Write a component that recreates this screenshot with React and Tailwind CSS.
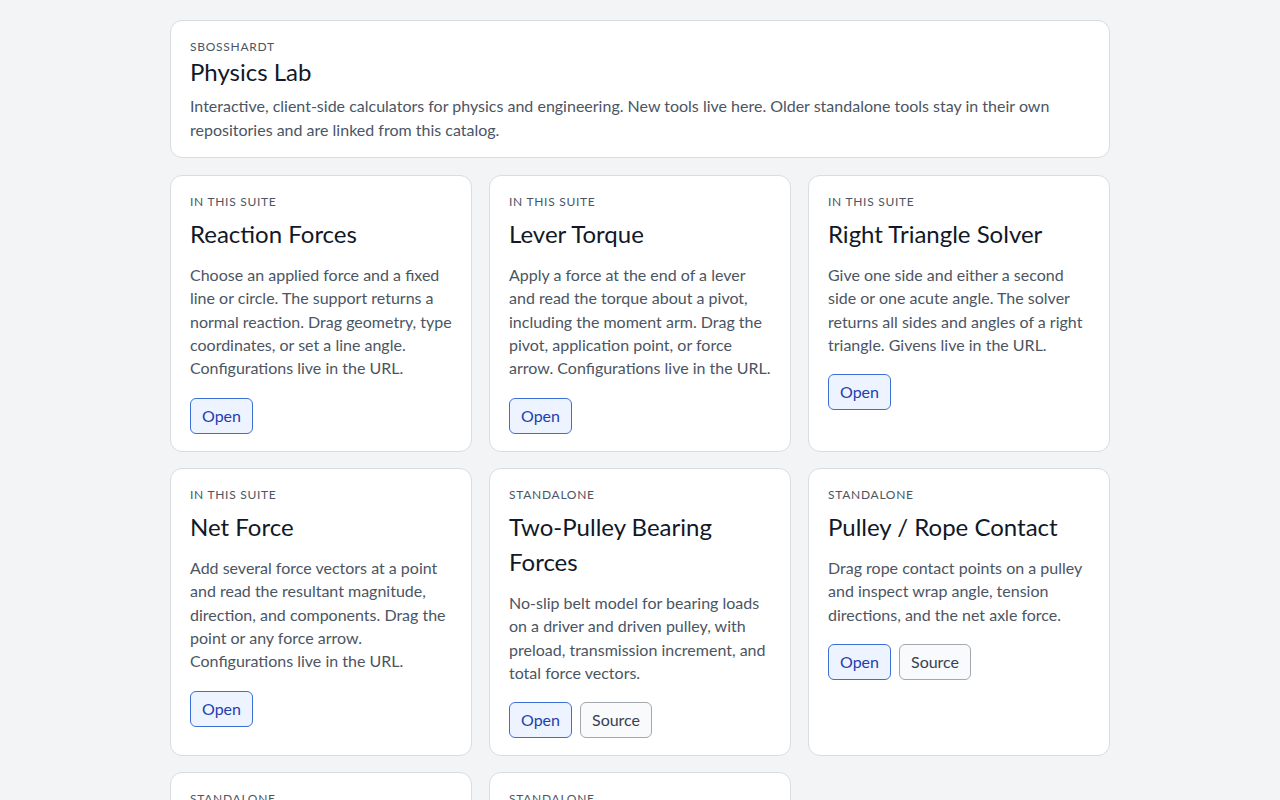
const tools = [
  {
    kind: 'In this suite',
    title: 'Reaction Forces',
    text: 'Choose an applied force and a fixed line or circle. The support returns a normal reaction. Drag geometry, type coordinates, or set a line angle. Configurations live in the URL.',
  },
  {
    kind: 'In this suite',
    title: 'Lever Torque',
    text: 'Apply a force at the end of a lever and read the torque about a pivot, including the moment arm. Drag the pivot, application point, or force arrow. Configurations live in the URL.',
  },
  {
    kind: 'In this suite',
    title: 'Right Triangle Solver',
    text: 'Give one side and either a second side or one acute angle. The solver returns all sides and angles of a right triangle. Givens live in the URL.',
  },
  {
    kind: 'In this suite',
    title: 'Net Force',
    text: 'Add several force vectors at a point and read the resultant magnitude, direction, and components. Drag the point or any force arrow. Configurations live in the URL.',
  },
  {
    kind: 'Standalone',
    title: 'Two-Pulley Bearing Forces',
    text: 'No-slip belt model for bearing loads on a driver and driven pulley, with preload, transmission increment, and total force vectors.',
    source: true,
  },
  {
    kind: 'Standalone',
    title: 'Pulley / Rope Contact',
    text: 'Drag rope contact points on a pulley and inspect wrap angle, tension directions, and the net axle force.',
    source: true,
  },
  {
    kind: 'Standalone',
    title: 'Beam Deflection',
    text: 'Set supports and loads on a simple beam and read shear, moment, and deflection along its length.',
    source: true,
  },
  {
    kind: 'Standalone',
    title: 'Inclined Plane',
    text: 'Place a block on a ramp and read the normal, friction, and gravity components for any angle.',
    source: true,
  },
];

const Label = ({ children }) => (
  <div className="text-[12px] leading-4 uppercase tracking-[0.06em] text-[#4b5563]">{children}</div>
);

const ToolCard = ({ tool }) => (
  <div className="bg-white border border-[#d9dce1] rounded-xl px-[19px] pt-[18px] pb-[17px] flex flex-col">
    <Label>{tool.kind}</Label>
    <h2 className="mt-[6px] text-[24px] leading-[35px] text-[#111827]">{tool.title}</h2>
    <p className="mt-[12px] text-[16px] leading-[1.46] text-[#4b5563]">{tool.text}</p>
    <div className="mt-[18px] flex gap-2">
      <a className="px-[11px] py-[5px] leading-6 text-[16px] rounded-md border border-[#3b6fd4] bg-[#eef4ff] text-[#1e40af]">
        Open
      </a>
      {tool.source && (
        <a className="px-[11px] py-[5px] leading-6 text-[16px] rounded-md border border-[#a3a7ae] bg-[#f8fafc] text-[#374151]">
          Source
        </a>
      )}
    </div>
  </div>
);

export default function App() {
  return (
    <div className="min-h-screen bg-[#f3f4f6] font-['Lato',sans-serif]">
      <div className="w-[940px] mx-auto pt-5 pb-10 flex flex-col gap-[17px]">
        <div className="bg-white border border-[#d9dce1] rounded-xl px-[19px] pt-[18px] pb-[15px]">
          <Label>sbosshardt</Label>
          <h1 className="mt-[2px] text-[24px] leading-[30px] text-[#111827]">Physics Lab</h1>
          <p className="mt-[7px] text-[16px] leading-6 text-[#4b5563]">
            Interactive, client-side calculators for physics and engineering. New tools live here. Older standalone tools
            stay in their own repositories and are linked from this catalog.
          </p>
        </div>
        <div className="grid grid-cols-3 gap-x-[17px] gap-y-4">
          {tools.map((t) => (
            <ToolCard key={t.title} tool={t} />
          ))}
        </div>
      </div>
    </div>
  );
}
